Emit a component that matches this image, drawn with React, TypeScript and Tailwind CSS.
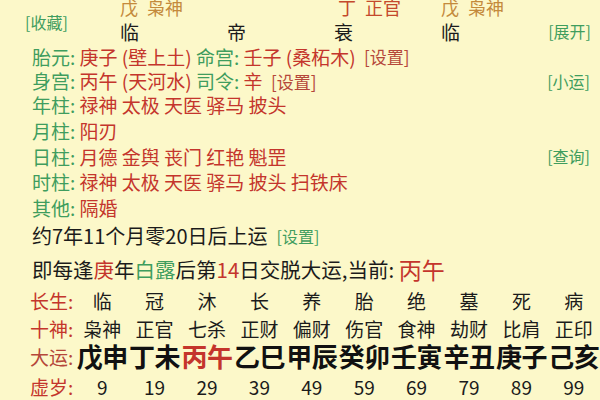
import React, { type FC } from 'react';

const green = 'text-[#3f9d5e]';
const red = 'text-[#c4352c]';
const brick = 'text-[#b5473a]';

const changSheng = ['临', '冠', '沐', '长', '养', '胎', '绝', '墓', '死', '病'];
const shiShen = ['枭神', '正官', '七杀', '正财', '偏财', '伤官', '食神', '劫财', '比肩', '正印'];
const daYun = ['戊申', '丁未', '丙午', '乙巳', '甲辰', '癸卯', '壬寅', '辛丑', '庚子', '己亥'];
const xuSui = ['9', '19', '29', '39', '49', '59', '69', '79', '89', '99'];

const Label: FC<{ text: string }> = ({ text }) => (
  <span className={green}>{text}: </span>
);

const ShenshaRow: FC<{ label: string; value: string; h: string; action?: string }> = ({
  label,
  value,
  h,
  action,
}) => (
  <div className={`flex items-center justify-between pl-[32px] pr-[10px] ${h}`}>
    <div className="whitespace-pre">
      <Label text={label} />
      <span className={red}>{value}</span>
    </div>
    {action && <span className={`text-[16px] ${green}`}>[{action}]</span>}
  </div>
);

const GridRow: FC<{ label: string; labelClass: string; h: string; children: React.ReactNode }> = ({
  label,
  labelClass,
  h,
  children,
}) => (
  <div className={`flex items-center ${h}`}>
    <div className={`w-[76px] shrink-0 pl-[30px] text-[19px] ${labelClass}`}>{label}:</div>
    <div className="grid flex-1 grid-cols-10 items-center text-[19px]">{children}</div>
  </div>
);

const TopCell: FC<{ gan: string; god: string; color: string }> = ({ gan, god, color }) => (
  <div className={`flex items-center gap-[9px] pt-[3px] text-[18px] ${color}`}>
    <span>{gan}</span>
    <span>{god}</span>
  </div>
);

const App: FC = () => {
  return (
    <div
      className="h-[400px] w-[600px] overflow-hidden bg-[#fcf8c9] text-[19px] leading-none text-[#1b1b1b]"
      style={{ fontFamily: '"Noto Sans CJK SC", "Noto Sans", sans-serif' }}
    >
      <div className="-mt-[8px]">
        {/* pillar header */}
        <div className="flex h-[52px]">
          <div className="w-[120px] shrink-0 pl-[25px] pt-[19px]">
            <span className={`text-[16px] ${green}`}>[收藏]</span>
          </div>
          <div className="grid w-[428px] shrink-0 grid-cols-4 grid-rows-2">
            <TopCell gan="戊" god="枭神" color="text-[#c48a3c]" />
            <div />
            <div className="flex pl-[4px]">
              <TopCell gan="丁" god="正官" color="text-[#c4492c]" />
            </div>
            <TopCell gan="戊" god="枭神" color="text-[#c48a3c]" />
            <div className="flex items-center">临</div>
            <div className="flex items-center">帝</div>
            <div className="flex items-center">衰</div>
            <div className="flex items-center">临</div>
          </div>
          <div className="flex min-w-0 flex-1 items-end justify-end pb-[5px] pr-[9px]">
            <span className={`whitespace-nowrap text-[16px] ${green}`}>[展开]</span>
          </div>
        </div>

        <div className="flex h-[25px] items-center pl-[32px] whitespace-pre">
          <Label text="胎元" />
          <span className={red}>庚子 (壁上土) </span>
          <Label text="命宫" />
          <span className={red}>壬子 (桑柘木)  </span>
          <span className={`text-[17px] ${brick}`}>[设置]</span>
        </div>
        <div className="flex h-[23px] items-center justify-between pl-[32px] pr-[10px] whitespace-pre">
          <div>
            <Label text="身宫" />
            <span className={red}>丙午 (天河水) </span>
            <Label text="司令" />
            <span className={red}>辛  </span>
            <span className={`text-[17px] ${brick}`}>[设置]</span>
          </div>
          <span className={`text-[16px] ${green}`}>[小运]</span>
        </div>
        <ShenshaRow label="年柱" value="禄神 太极 天医 驿马 披头" h="h-[25px]" />
        <ShenshaRow label="月柱" value="阳刃" h="h-[26px]" />
        <ShenshaRow label="日柱" value="月德 金舆 丧门 红艳 魁罡" h="h-[26px]" action="查询" />
        <ShenshaRow label="时柱" value="禄神 太极 天医 驿马 披头 扫铁床" h="h-[25px]" />
        <ShenshaRow label="其他" value="隔婚" h="h-[26px]" />

        <div className="flex h-[32px] items-center pl-[32px] text-[20px] whitespace-pre">
          约7年11个月零20日后上运  <span className={`text-[16px] ${green}`}>[设置]</span>
        </div>
        <div className="flex h-[34px] items-center pl-[32px] text-[20.5px] whitespace-pre">
          即每逢<span className={red}>庚</span>年<span className={green}>白露</span>后第
          <span className={red}>14</span>日交脱大运,当前: <span className={`text-[23px] ${red}`}>丙午</span>
        </div>

        <GridRow label="长生" labelClass={red} h="h-[28px]">
          {changSheng.map((c, i) => (
            <div key={i} className="text-center">{c}</div>
          ))}
        </GridRow>
        <GridRow label="十神" labelClass={red} h="h-[28px]">
          {shiShen.map((c, i) => (
            <div key={i} className="text-center">{c}</div>
          ))}
        </GridRow>
        <GridRow label="大运" labelClass={brick} h="h-[28px]">
          {daYun.map((c, i) => (
            <div
              key={i}
              className={`text-center text-[26px] font-bold tracking-[-0.5px] ${i === 2 ? red : 'text-[#111]'}`}
            >
              {c}
            </div>
          ))}
        </GridRow>
        <GridRow label="虚岁" labelClass={red} h="h-[32px]">
          {xuSui.map((c, i) => (
            <div key={i} className="text-center">{c}</div>
          ))}
        </GridRow>
      </div>
    </div>
  );
};

export default App;
